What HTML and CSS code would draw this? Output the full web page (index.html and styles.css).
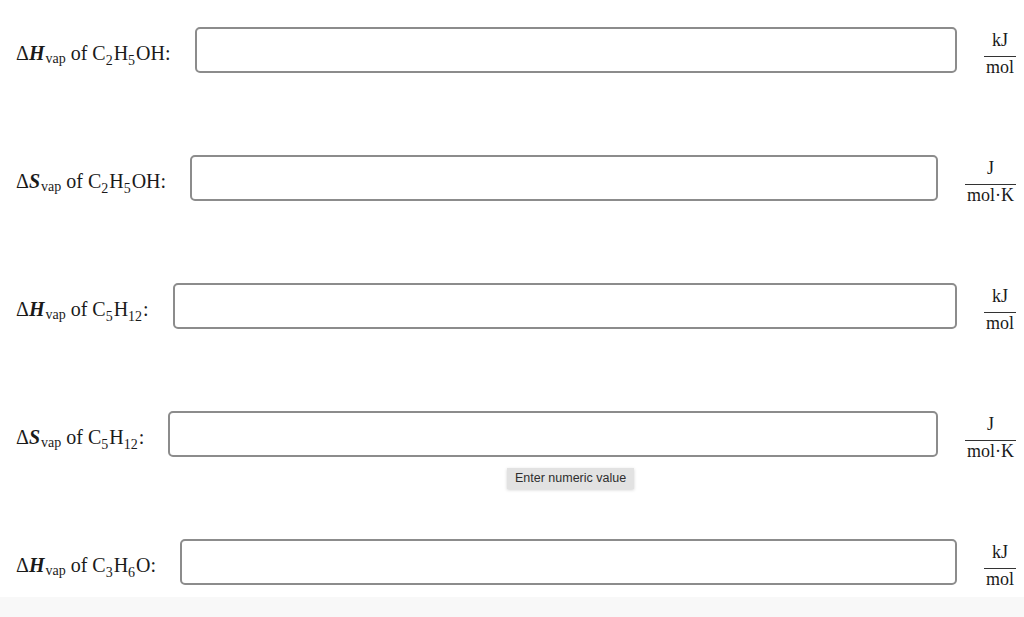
FILE: index.html
```html
<!doctype html>
<html lang="en">
<head>
    <meta charset="UTF-8">
    <title>Vaporization</title>
    <link rel="stylesheet" href="styles.css">
</head>
<body>
<div class="sheet">
    <div class="row">
        <div class="label">&Delta;<i>H</i><span class="sub-vap">vap</span> of C<span class="sub">2</span>H<span class="sub">5</span>OH:</div>
        <input class="answer" type="text">
        <div class="unit">
            <div class="num">kJ</div>
            <div class="den">mol</div>
        </div>
    </div>
    <div class="row">
        <div class="label">&Delta;<i>S</i><span class="sub-vap">vap</span> of C<span class="sub">2</span>H<span class="sub">5</span>OH:</div>
        <input class="answer" type="text">
        <div class="unit">
            <div class="num">J</div>
            <div class="den">mol&middot;K</div>
        </div>
    </div>
    <div class="row">
        <div class="label">&Delta;<i>H</i><span class="sub-vap">vap</span> of C<span class="sub">5</span>H<span class="sub">12</span>:</div>
        <input class="answer" type="text">
        <div class="unit">
            <div class="num">kJ</div>
            <div class="den">mol</div>
        </div>
    </div>
    <div class="row">
        <div class="label">&Delta;<i>S</i><span class="sub-vap">vap</span> of C<span class="sub">5</span>H<span class="sub">12</span>:</div>
        <input class="answer" type="text">
        <div class="unit">
            <div class="num">J</div>
            <div class="den">mol&middot;K</div>
        </div>
    </div>
    <div class="row">
        <div class="label">&Delta;<i>H</i><span class="sub-vap">vap</span> of C<span class="sub">3</span>H<span class="sub">6</span>O:</div>
        <input class="answer" type="text">
        <div class="unit">
            <div class="num">kJ</div>
            <div class="den">mol</div>
        </div>
    </div>
</div>
<!-- tooltip of the hovered field -->
<div class="tip">Enter numeric value</div>
<div class="band"></div>
</body>
</html>
```

FILE: styles.css
```css
body{
    margin: 0;
    background: #fff;
    color: #1a1a1a;
    font-family: "Liberation Serif", "Times New Roman", serif;
}
.sheet{
    padding: 27px 8px 0 16px;
}
.row{
    display: flex;
    align-items: center;
    height: 46px;
    margin-bottom: 82px;
}
.row:last-child{
    margin-bottom: 0;
}
.label{
    font-size: 20px;
    padding-top: 6px;
    white-space: nowrap;
    margin-right: 24px;
}
.label i{
    font-weight: bold;
    font-style: italic;
}
.sub-vap{
    font-size: 14px;
    line-height: 0;
    vertical-align: -3px;
    margin-left: 1px;
}
.sub{
    font-size: 14px;
    line-height: 0;
    vertical-align: -5px;
    margin-right: 1px;
}
.answer{
    flex: 1;
    height: 46px;
    box-sizing: border-box;
    border: 2px solid #8c8c8c;
    border-radius: 5px;
    background: #fff;
    outline: none;
}
.unit{
    margin-left: 27px;
    margin-top: 7px;
    font-size: 18px;
    text-align: center;
}
.num{
    line-height: 20px;
    padding: 0 2px 6px;
    border-bottom: 1px solid #333;
}
.den{
    line-height: 20px;
    padding: 0 2px;
}
.tip{
    position: absolute;
    left: 507px;
    top: 468px;
    height: 21px;
    line-height: 21px;
    padding: 0 8px;
    background: #e2e2e2;
    color: #2e2e2e;
    font-family: "Liberation Sans", Arial, sans-serif;
    font-size: 12.5px;
    box-shadow: 0 1px 3px rgba(0,0,0,0.18);
}
.band{
    margin-top: 12px;
    height: 20px;
    background: #f8f8f8;
}
```
